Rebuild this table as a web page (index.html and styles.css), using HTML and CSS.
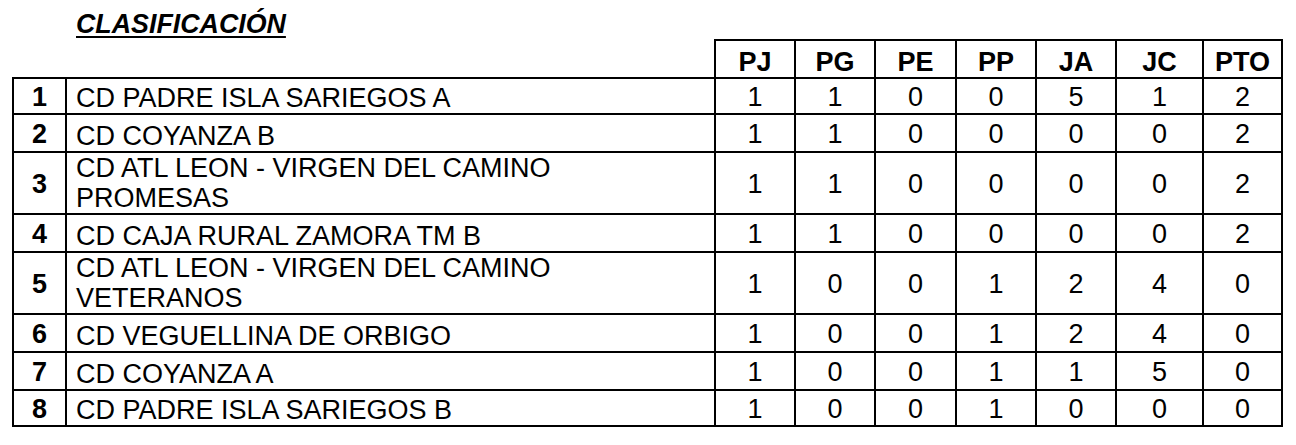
FILE: index.html
```html
<!DOCTYPE html>
<html lang="es">
<head>
<meta charset="utf-8">
<title>Clasificación</title>
<link rel="stylesheet" href="styles.css">
</head>
<body>
<div class="page">
  <h1 class="title">CLASIFICACIÓN</h1>
  <table class="standings">
    <colgroup>
      <col class="c-rank">
      <col class="c-team">
      <col class="c-pj">
      <col class="c-pg">
      <col class="c-pe">
      <col class="c-pp">
      <col class="c-ja">
      <col class="c-jc">
      <col class="c-pto">
    </colgroup>
    <thead>
      <tr class="row">
        <th class="blank"></th>
        <th class="blank"></th>
        <th>PJ</th><th>PG</th><th>PE</th><th>PP</th><th>JA</th><th>JC</th><th>PTO</th>
      </tr>
    </thead>
    <tbody>
      <tr class="row-short">
        <td class="rank">1</td><td class="team">CD PADRE ISLA SARIEGOS A</td>
        <td>1</td><td>1</td><td>0</td><td>0</td><td>5</td><td>1</td><td>2</td>
      </tr>
      <tr class="row">
        <td class="rank">2</td><td class="team">CD COYANZA B</td>
        <td>1</td><td>1</td><td>0</td><td>0</td><td>0</td><td>0</td><td>2</td>
      </tr>
      <tr class="row-tall">
        <td class="rank">3</td><td class="team">CD ATL LEON - VIRGEN DEL CAMINO<br>PROMESAS</td>
        <td>1</td><td>1</td><td>0</td><td>0</td><td>0</td><td>0</td><td>2</td>
      </tr>
      <tr class="row">
        <td class="rank">4</td><td class="team">CD CAJA RURAL ZAMORA TM B</td>
        <td>1</td><td>1</td><td>0</td><td>0</td><td>0</td><td>0</td><td>2</td>
      </tr>
      <tr class="row-tall">
        <td class="rank">5</td><td class="team">CD ATL LEON - VIRGEN DEL CAMINO<br>VETERANOS</td>
        <td>1</td><td>0</td><td>0</td><td>1</td><td>2</td><td>4</td><td>0</td>
      </tr>
      <tr class="row">
        <td class="rank">6</td><td class="team">CD VEGUELLINA DE ORBIGO</td>
        <td>1</td><td>0</td><td>0</td><td>1</td><td>2</td><td>4</td><td>0</td>
      </tr>
      <tr class="row">
        <td class="rank">7</td><td class="team">CD COYANZA A</td>
        <td>1</td><td>0</td><td>0</td><td>1</td><td>1</td><td>5</td><td>0</td>
      </tr>
      <tr class="row-short">
        <td class="rank">8</td><td class="team">CD PADRE ISLA SARIEGOS B</td>
        <td>1</td><td>0</td><td>0</td><td>1</td><td>0</td><td>0</td><td>0</td>
      </tr>
    </tbody>
  </table>
</div>
</body>
</html>
```
FILE: styles.css
```css
html, body {
  margin: 0;
  padding: 0;
  background: #ffffff;
}

.page {
  padding: 9px 0 0 12px;
  font-family: "Liberation Sans", Arial, sans-serif;
  color: #000000;
}

.title {
  margin: 0 0 0 64px;
  font-size: 26.8px;
  line-height: 30px;
  font-weight: bold;
  font-style: italic;
  text-decoration: underline;
  text-decoration-thickness: 2px;
  text-underline-offset: 3px;
}

.standings {
  border-collapse: collapse;
  table-layout: fixed;
  width: 1271px;
  font-size: 27px;
  line-height: 30px;
}

.c-rank { width: 53px; }
.c-team { width: 649px; }
.c-pj { width: 80px; }
.c-pg { width: 80px; }
.c-pe { width: 81px; }
.c-pp { width: 80px; }
.c-ja { width: 80px; }
.c-jc { width: 87px; }
.c-pto { width: 79px; }

.row { height: 38px; }
.row-short { height: 36px; }
.row-tall { height: 62px; }

.standings th,
.standings td {
  border: 2px solid #000000;
  padding: 0;
  text-align: center;
  vertical-align: middle;
  white-space: nowrap;
}

.standings th {
  font-weight: bold;
  vertical-align: bottom;
}

.standings th.blank {
  border-top: none;
  border-left: none;
  border-right: none;
}

.standings td {
  padding-top: 2px;
}

.standings td.rank {
  font-weight: bold;
}

.standings td.team {
  text-align: left;
  vertical-align: bottom;
  padding: 0 0 0 9px;
}
```
